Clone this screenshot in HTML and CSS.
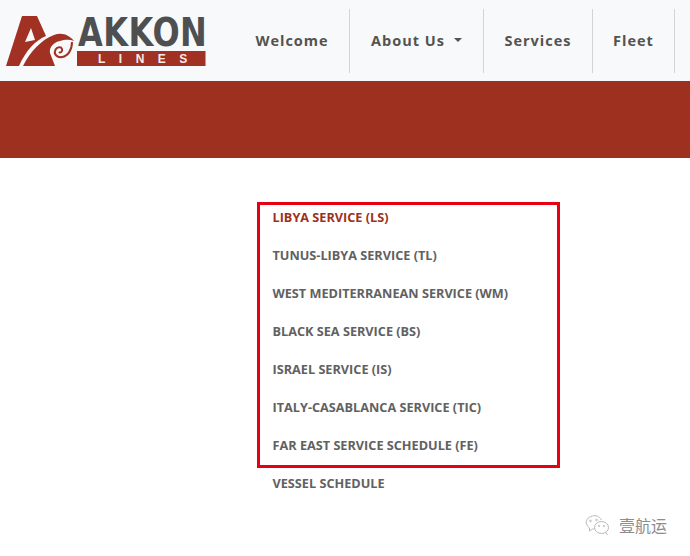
FILE: index.html
```html
<!DOCTYPE html>
<html lang="en">
<head>
    <meta charset="UTF-8">
    <meta name="viewport" content="width=device-width, initial-scale=1.0">
    <title>Akkon Lines</title>
    <link rel="stylesheet" href="styles.css">
</head>
<body>
    <header class="topbar">
        <a class="logo" href="#">
            <svg width="206" height="68" viewBox="0 0 206 68">
                <path d="M6 66 L22 16 L37 16 L46 36 C36 40 26 50 19 66 Z M31 28 L25 42 L35 40 Z" fill="#a13122" fill-rule="evenodd"/>
                <path d="M23 66 C30 52 42 39 54 35 C62 32 69 35 74 41 C69 39 64 40 60 41 C54 42 49 47 50 53 L55 66 Z" fill="#a13122"/>
                <path d="M72 42 C72 50 68 56 62 57 C57 58 54 54 55 51 C56 47 61 46 62 49 C63 52 60 53 59 52" fill="none" stroke="#a13122" stroke-width="2"/>
                <text class="logo-name" transform="translate(78 46) scale(1 1.240)">AKKON</text>
                <rect x="77" y="51" width="128.500" height="15" fill="#a13122"/>
                <text class="logo-sub" x="98" y="63">LINES</text>
            </svg>
        </a>
        <nav class="menu">
            <a class="menu-item item-welcome" href="#">Welcome</a>
            <a class="menu-item item-about" href="#">About Us <span class="caret"></span></a>
            <a class="menu-item item-services" href="#">Services</a>
            <a class="menu-item item-fleet" href="#">Fleet</a>
        </nav>
    </header>
    <div class="banner"></div>
    <main class="content">
        <div class="highlight">
            <ul class="services">
                <li><a class="active" href="#">LIBYA SERVICE (LS)</a></li>
                <li><a href="#">TUNUS-LIBYA SERVICE (TL)</a></li>
                <li><a href="#">WEST MEDITERRANEAN SERVICE (WM)</a></li>
                <li><a href="#">BLACK SEA SERVICE (BS)</a></li>
                <li><a href="#">ISRAEL SERVICE (IS)</a></li>
                <li><a href="#">ITALY-CASABLANCA SERVICE (TIC)</a></li>
                <li><a href="#">FAR EAST SERVICE SCHEDULE (FE)</a></li>
            </ul>
        </div>
        <a class="vessel" href="#">VESSEL SCHEDULE</a>
    </main>
    <div class="watermark">
        <svg width="27" height="22" viewBox="0 0 26 22" fill="none" stroke="#b9b9b9" stroke-width="1">
            <path d="M17 6 C15 2 11 1 8 2 C3 3 1 7 2 10 C3 12 4 13 5 14 L5 17 L8 15 C9 15 10 15 10 15"/>
            <ellipse cx="17" cy="13.500" rx="7" ry="6"/>
            <path d="M21 18 L23 21"/>
            <circle cx="6" cy="7" r=".8"/>
            <circle cx="12" cy="6" r=".8"/>
            <circle cx="14.500" cy="12" r=".6"/>
            <circle cx="19.500" cy="12" r=".6"/>
        </svg>
        <span>壹航运</span>
    </div>
</body>
</html>
```

FILE: styles.css
```css
html, body {
    height: 100%;
}
body {
    font-family: 'Open Sans', 'Noto Sans', sans-serif;
    margin: 0;
    padding: 0;
    background: #fff;
    overflow: hidden;
    position: relative;
}
a {
    text-decoration: none;
}
.topbar {
    display: flex;
    height: 81px;
    background: #f8f9fa;
}
.logo {
    display: block;
    width: 206px;
    height: 81px;
    flex: none;
}
.logo svg {
    display: block;
}
.logo-name {
    font-family: 'DejaVu Sans', sans-serif;
    font-weight: 700;
    font-size: 32px;
    letter-spacing: .5px;
    fill: #4d4f51;
}
.logo-sub {
    font-family: 'Liberation Sans', sans-serif;
    font-weight: 700;
    font-size: 12px;
    letter-spacing: 13.500px;
    fill: #f6ece9;
}
.menu {
    display: flex;
    align-items: center;
    height: 64px;
    margin-top: 9px;
}
.menu-item {
    display: flex;
    align-items: center;
    justify-content: center;
    box-sizing: border-box;
    height: 64px;
    padding-bottom: 2px;
    border-right: 1px solid #d3d4d5;
    color: #55534f;
    font-size: 14.500px;
    font-weight: 700;
    letter-spacing: 1px;
}
.item-welcome {
    width: 144px;
    padding-left: 29px;
}
.item-about {
    width: 134px;
}
.item-services {
    width: 109px;
}
.item-fleet {
    width: 82px;
}
.caret {
    display: inline-block;
    margin-left: 9px;
    border-top: 4px solid #55534f;
    border-left: 4.500px solid transparent;
    border-right: 4.500px solid transparent;
}
.banner {
    height: 77px;
    background: #9e3020;
}
.content {
    padding: 44px 0 0 257px;
}
.highlight {
    box-sizing: border-box;
    width: 303px;
    height: 266px;
    border: 3px solid #e60012;
    padding: 0 0 7px 12.500px;
}
.services {
    list-style: none;
    margin: 0;
    padding: 0;
    display: flex;
    flex-direction: column;
    gap: 14px;
}
.services a, .vessel {
    display: block;
    height: 24px;
    line-height: 24px;
    color: #616161;
    font-size: 12.700px;
    font-weight: 700;
}
.services a.active {
    color: #9e3020;
}
.vessel {
    margin: 3px 0 0 15.500px;
}
.watermark {
    position: absolute;
    right: 23px;
    top: 514px;
    display: flex;
    align-items: center;
    gap: 8px;
    color: #8c8c8c;
    font-family: 'Noto Sans CJK SC', sans-serif;
    font-size: 16px;
    line-height: 22px;
}
```
